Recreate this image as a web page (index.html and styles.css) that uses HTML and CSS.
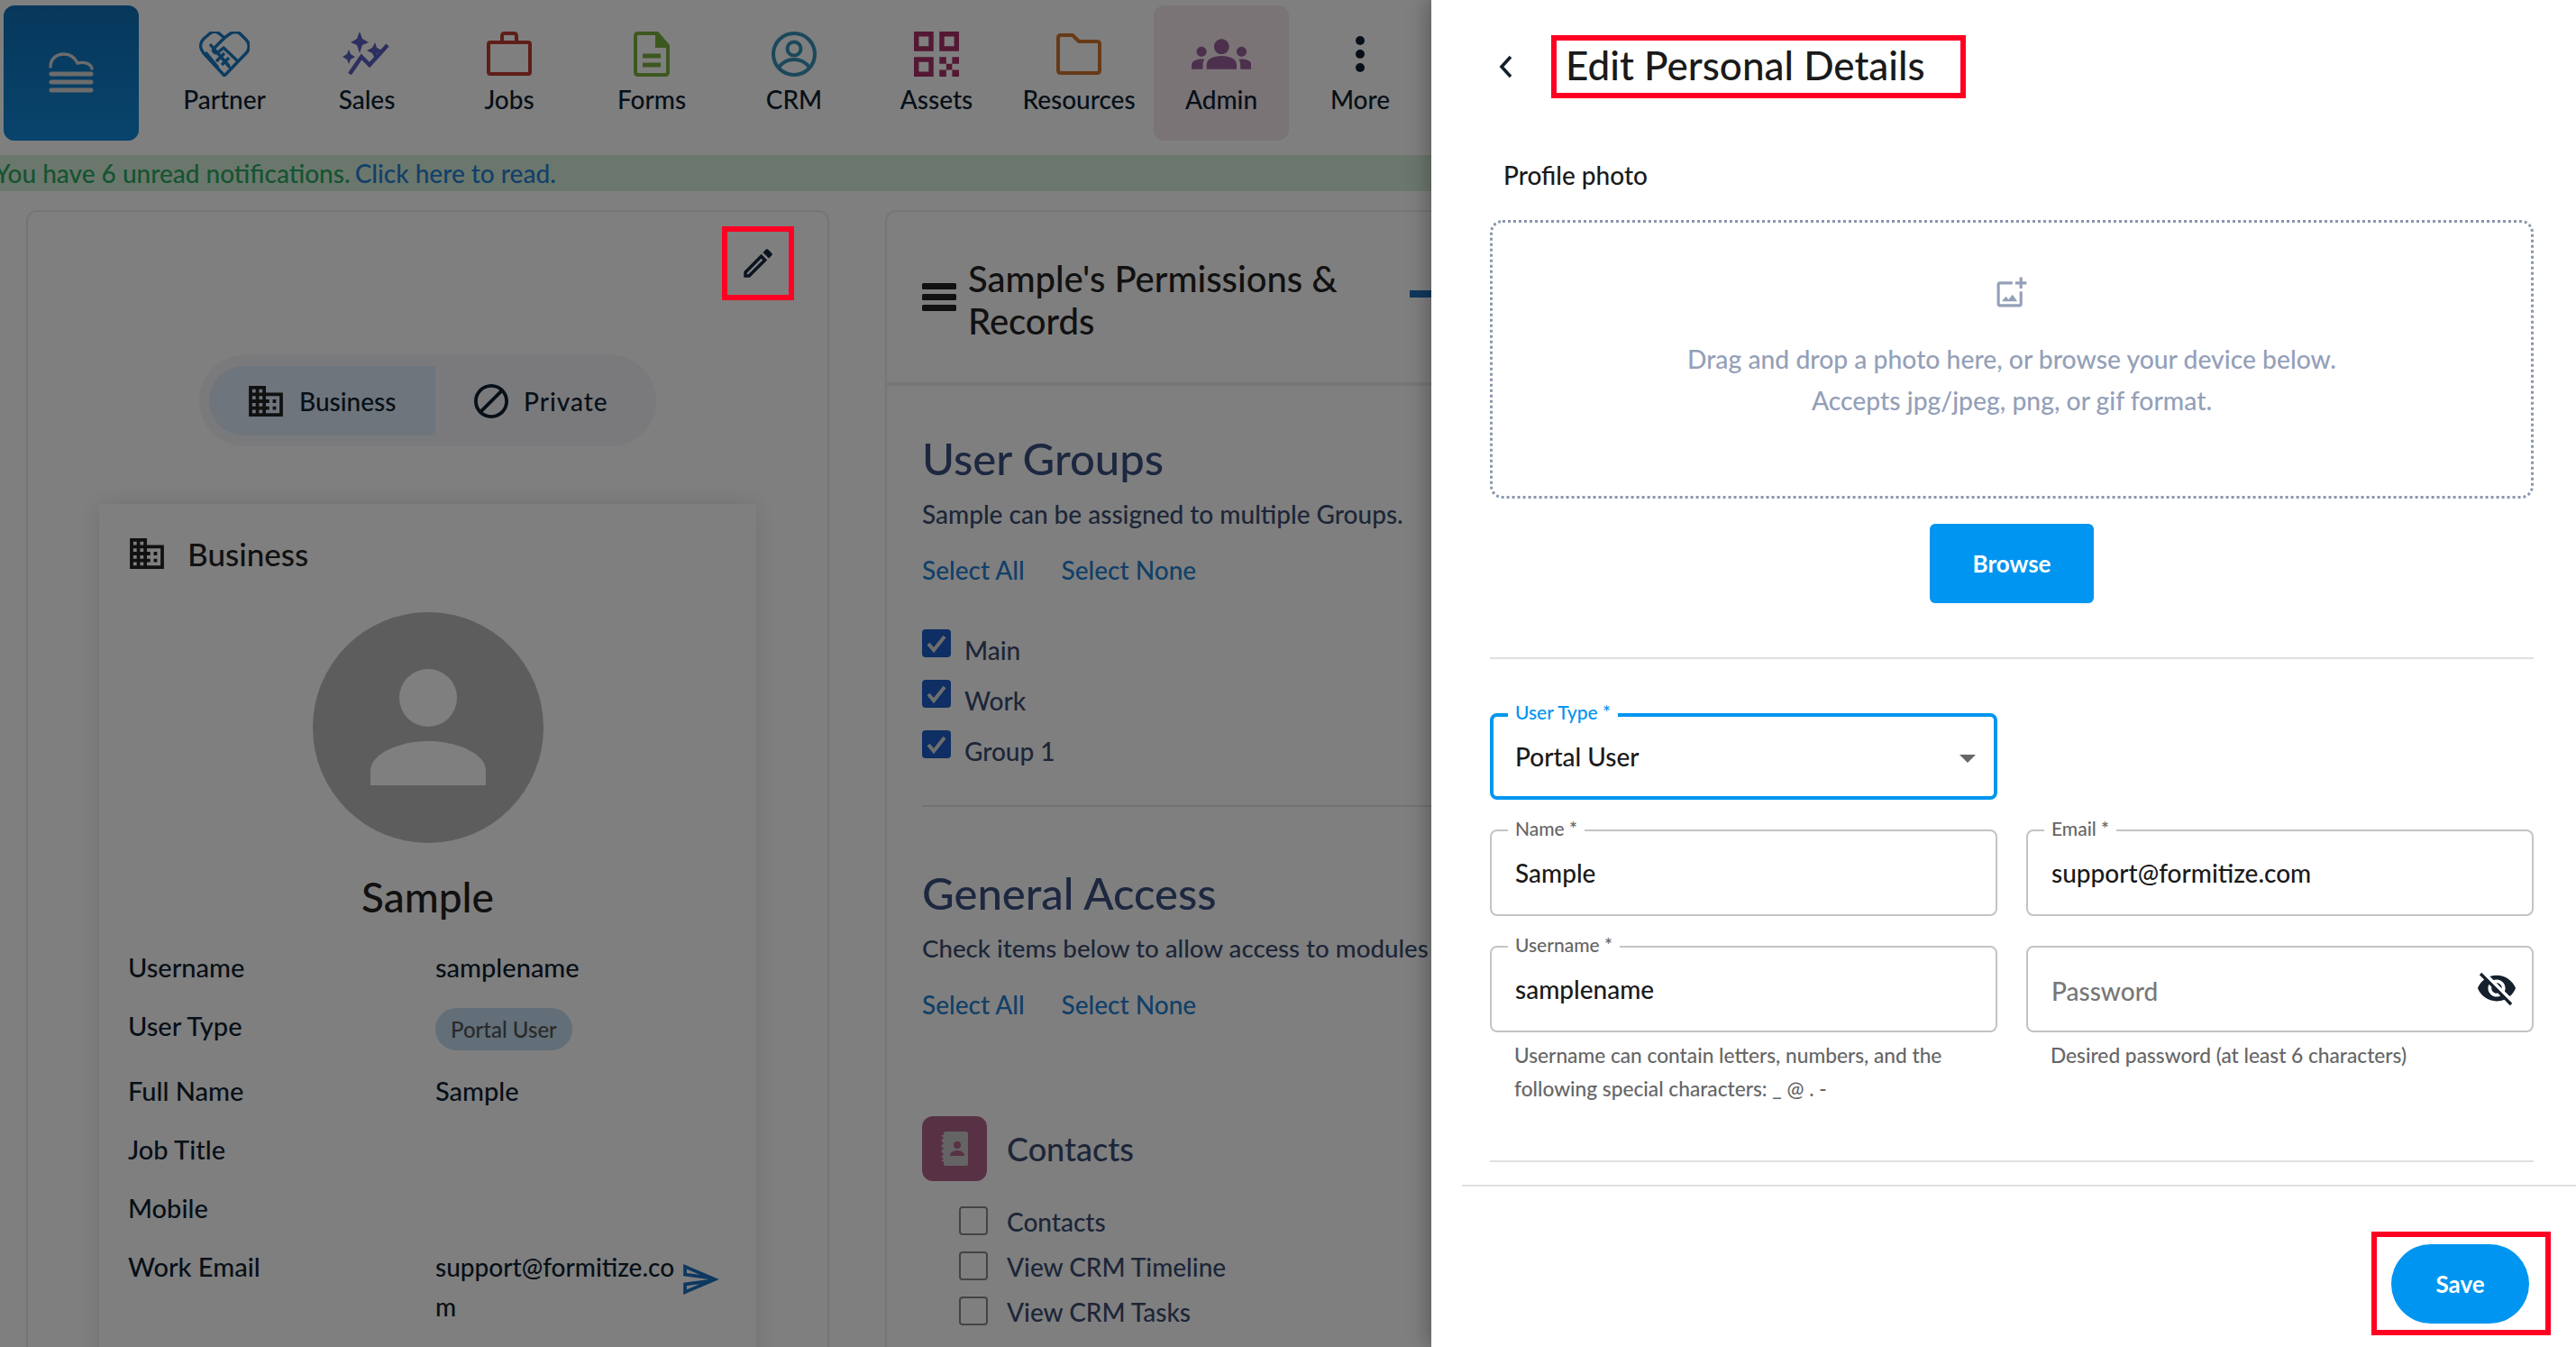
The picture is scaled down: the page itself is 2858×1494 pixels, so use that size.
FILE: index.html
```html
<!DOCTYPE html>
<html lang="en">
<head>
    <meta charset="UTF-8">
    <meta name="viewport" content="width=device-width, initial-scale=1.0">
    <title>Edit Personal Details</title>
    <link rel="stylesheet" href="styles.css">
</head>
<body>
    <div class="page">
        <nav class="topnav">
            <a class="logo-tile">
                <svg viewBox="0 0 50 46" width="50" height="46" fill="none" stroke="#d8d8d8" stroke-linecap="round">
                    <path d="M2 16C2 7 9 2 17 2c7 0 12 4 15 10 8-2 15 1 16 6" stroke-width="3.4"/>
                    <path d="M3 24h44M3 33h44M3 42h44" stroke-width="5"/>
                </svg>
            </a>
            <a class="nav-item">
                <svg class="nav-icon" viewBox="0 0 56 50" fill="none" stroke="#1878c0" stroke-width="3.4" stroke-linejoin="round">
                    <path d="M28 49 5 24C0 18 1 12 5 8l7-6c3-2 7-2 10 0l6 5 7-5c4-2 8-2 11 1l6 6c4 4 4 10 1 14z"/>
                    <path d="m28 7-12 12c-2 3 2 6 5 4l6-5 17 16M12 14l22 26M7 23l14 17M17 20l16 18M28 24l-9 9M33 29l-8 8"/>
                </svg>
                <span>Partner</span>
            </a>
            <a class="nav-item">
                <svg class="nav-icon" viewBox="0 0 55 50" fill="#5a5ec0">
                    <path d="M19 0l3 8 7 4-7 3-3 9-3-9-7-3 7-4zM36 12l2 6 6 3-6 3-2 6-3-6-6-3 6-3zM7 20l2 5 5 3-5 3-2 5-2-5-5-3 5-3z"/>
                    <path d="M8 47 21 28l9 9 20-22" fill="none" stroke="#5a5ec0" stroke-width="4.5"/>
                </svg>
                <span>Sales</span>
            </a>
            <a class="nav-item">
                <svg class="nav-icon" viewBox="0 0 50 50" fill="none" stroke="#c03c32" stroke-width="4">
                    <rect x="2" y="12" width="46" height="35" rx="2"/>
                    <path d="M17 12V5c0-2 1-3 3-3h10c2 0 3 1 3 3v7"/>
                </svg>
                <span>Jobs</span>
            </a>
            <a class="nav-item">
                <svg class="nav-icon" viewBox="0 0 40 50" fill="none" stroke="#7ab03e" stroke-width="4">
                    <path d="M2 5c0-2 1-3 3-3h21l12 14v29c0 2-1 3-3 3H5c-2 0-3-1-3-3z"/>
                    <path d="M26 2l12 14H26z" fill="#7ab03e"/>
                    <path d="M10 27h20M10 37h20" stroke-width="5"/>
                </svg>
                <span>Forms</span>
            </a>
            <a class="nav-item">
                <svg class="nav-icon" viewBox="0 0 50 50" fill="none" stroke="#3690b8" stroke-width="4">
                    <circle cx="25" cy="25" r="23"/>
                    <circle cx="25" cy="19" r="7.5"/>
                    <path d="M8 40c4-6 10-9 17-9s13 3 17 9"/>
                </svg>
                <span>CRM</span>
            </a>
            <a class="nav-item">
                <svg class="nav-icon" viewBox="0 0 46 46" fill="#a83068">
                    <path d="M0 0h20v20H0zm5 5v10h10V5zM26 0h20v20H26zm5 5v10h10V5zM0 26h20v20H0zm5 5v10h10V31zM26 26h7v7h-7zM39 26h7v7h-7zM33 33h6v6h-6zM26 39h7v7h-7zM39 39h7v7h-7z" fill-rule="evenodd"/>
                </svg>
                <span>Assets</span>
            </a>
            <a class="nav-item">
                <svg class="nav-icon" viewBox="0 0 50 50" fill="none" stroke="#d07430" stroke-width="4" stroke-linejoin="round">
                    <path d="M2 7c0-2 1-3 3-3h13l7 7h20c2 0 3 1 3 3v29c0 2-1 3-3 3H5c-2 0-3-1-3-3z"/>
                </svg>
                <span>Resources</span>
            </a>
            <a class="nav-item is-active">
                <svg class="nav-icon" viewBox="0 3 24 18" fill="#98609a">
                    <path d="M12 12.75c1.63 0 3.07.39 4.24.9 1.08.48 1.76 1.56 1.76 2.73V18H6v-1.61c0-1.18.68-2.26 1.76-2.73 1.17-.52 2.61-.91 4.24-.91zM4 13c1.1 0 2-.9 2-2s-.9-2-2-2-2 .9-2 2 .9 2 2 2zm1.13 1.1c-.37-.06-.74-.1-1.13-.1-.99 0-1.93.21-2.78.58C.48 14.9 0 15.62 0 16.43V18h4.5v-1.61c0-.83.23-1.61.63-2.29zM20 13c1.1 0 2-.9 2-2s-.9-2-2-2-2 .9-2 2 .9 2 2 2zm4 3.43c0-.81-.48-1.53-1.22-1.85-.85-.37-1.79-.58-2.78-.58-.39 0-.76.04-1.13.1.4.68.63 1.46.63 2.29V18H24v-1.57zM12 6c1.66 0 3 1.34 3 3s-1.34 3-3 3-3-1.34-3-3 1.34-3 3-3z"/>
                </svg>
                <span>Admin</span>
            </a>
            <a class="nav-item nav-more">
                <svg class="nav-icon" viewBox="0 0 12 50" fill="#0e1e30">
                    <circle cx="6" cy="10" r="5"/><circle cx="6" cy="25" r="5"/><circle cx="6" cy="40" r="5"/>
                </svg>
                <span>More</span>
            </a>
        </nav>

        <div class="notice">You have 6 unread notifications. <a>Click here to read.</a></div>

        <div class="content">
            <section class="card user-card">
                <button class="edit-btn">
                    <svg viewBox="0 0 24 24" width="42" height="42" fill="#0a1420"><path d="M3 17.25V21h3.75L17.81 9.94l-3.75-3.75L3 17.25zM5.92 19H5v-.92l9.06-9.06.92.92L5.92 19zM20.71 5.63l-2.34-2.34c-.2-.2-.45-.29-.71-.29s-.51.1-.7.29l-1.83 1.83 3.75 3.75 1.83-1.83c.39-.39.39-1.02 0-1.41z"/></svg>
                </button>

                <div class="toggle">
                    <div class="toggle-opt is-on">
                        <svg viewBox="2 3 20 18" width="38" height="34" fill="#222"><path d="M12 7V3H2v18h20V7H12zM6 19H4v-2h2v2zm0-4H4v-2h2v2zm0-4H4V9h2v2zm0-4H4V5h2v2zm4 12H8v-2h2v2zm0-4H8v-2h2v2zm0-4H8V9h2v2zm0-4H8V5h2v2zm10 12h-8v-2h2v-2h-2v-2h2v-2h-2V9h8v10zm-2-8h-2v2h2v-2zm0 4h-2v2h2v-2z"/></svg>
                        <span>Business</span>
                    </div>
                    <div class="toggle-opt">
                        <svg viewBox="2 2 20 20" width="38" height="38" fill="#0e1e30"><path d="M12 2C6.48 2 2 6.48 2 12s4.48 10 10 10 10-4.48 10-10S17.52 2 12 2zM4 12c0-4.42 3.58-8 8-8 1.85 0 3.55.63 4.9 1.69L5.69 16.9C4.63 15.55 4 13.85 4 12zm8 8c-1.85 0-3.55-.63-4.9-1.69L18.31 7.1C19.37 8.45 20 10.15 20 12c0 4.42-3.58 8-8 8z"/></svg>
                        <span class="private-text">Private</span>
                    </div>
                </div>

                <div class="profile">
                    <h3 class="profile-head">
                        <svg viewBox="2 3 20 18" width="38" height="34" fill="#222"><path d="M12 7V3H2v18h20V7H12zM6 19H4v-2h2v2zm0-4H4v-2h2v2zm0-4H4V9h2v2zm0-4H4V5h2v2zm4 12H8v-2h2v2zm0-4H8v-2h2v2zm0-4H8V9h2v2zm0-4H8V5h2v2zm10 12h-8v-2h2v-2h-2v-2h2v-2h-2V9h8v10zm-2-8h-2v2h2v-2zm0 4h-2v2h2v-2z"/></svg>
                        Business
                    </h3>
                    <svg class="avatar" viewBox="0 0 256 256">
                        <circle cx="128" cy="128" r="128" fill="#bbb"/>
                        <circle cx="128" cy="95" r="32" fill="#fff"/>
                        <path d="M64 192v-16c0-20 34-33 64-33s64 13 64 33v16z" fill="#fff"/>
                    </svg>
                    <h2 class="profile-name">Sample</h2>
                    <div class="rows">
                        <div class="row"><span class="row-label">Username</span><span class="row-value">samplename</span></div>
                        <div class="row row-chip"><span class="row-label">User Type</span><span class="chip">Portal User</span></div>
                        <div class="row"><span class="row-label">Full Name</span><span class="row-value">Sample</span></div>
                        <div class="row"><span class="row-label">Job Title</span></div>
                        <div class="row"><span class="row-label">Mobile</span></div>
                        <div class="row">
                            <span class="row-label">Work Email</span>
                            <span class="row-value row-email">support@formitize.com</span>
                            <svg class="send-icon" viewBox="2 3 21 18" width="40" height="34" fill="#1a70c0"><path d="M4.01 6.03l7.51 3.22-7.52-1 .01-2.22m7.5 8.72L4 17.97v-2.22l7.51-1M2.01 3L2 10l15 2-15 2 .01 7L23 12 2.01 3z"/></svg>
                        </div>
                    </div>
                </div>
            </section>

            <section class="card perms-card">
                <header class="perms-head">
                    <svg viewBox="0 0 38 31" width="38" height="31" fill="#222"><rect width="38" height="7" rx="1.5"/><rect y="12" width="38" height="7" rx="1.5"/><rect y="24" width="38" height="7" rx="1.5"/></svg>
                    <h2>Sample's Permissions &amp; Records</h2>
                    <i class="dash"></i>
                </header>
                <div class="perms-body">
                    <h3 class="section-title">User Groups</h3>
                    <p class="section-text">Sample can be assigned to multiple Groups.</p>
                    <div class="links"><a>Select All</a><a>Select None</a></div>
                    <ul class="checks">
                        <li><span class="box is-checked"><svg viewBox="0 0 32 31" width="32" height="31"><path d="M7 16l6 7 12-15" fill="none" stroke="#ddd" stroke-width="4"/></svg></span><span class="check-text">Main</span></li>
                        <li><span class="box is-checked"><svg viewBox="0 0 32 31" width="32" height="31"><path d="M7 16l6 7 12-15" fill="none" stroke="#ddd" stroke-width="4"/></svg></span><span class="check-text">Work</span></li>
                        <li><span class="box is-checked"><svg viewBox="0 0 32 31" width="32" height="31"><path d="M7 16l6 7 12-15" fill="none" stroke="#ddd" stroke-width="4"/></svg></span><span class="check-text">Group 1</span></li>
                    </ul>
                    <hr class="section-rule">
                    <h3 class="section-title access-title">General Access</h3>
                    <p class="section-text access-text">Check items below to allow access to modules</p>
                    <div class="links"><a>Select All</a><a>Select None</a></div>
                    <div class="module">
                        <span class="module-icon">
                            <svg viewBox="0 0 30 38" width="30" height="38" fill="#c8c8c8"><path d="M3 2c0-1 1-2 2-2h23c1 0 2 1 2 2v34c0 1-1 2-2 2H5c-1 0-2-1-2-2v-3H0l3-3-3-2 3-3-3-3 3-3-3-3 3-3-3-3 3-3-3-3h3z"/><circle cx="18" cy="15" r="4" fill="#b06488"/><path d="M10 27c0-4 4-6 8-6s8 2 8 6z" fill="#b06488"/></svg>
                        </span>
                        <span class="module-name">Contacts</span>
                    </div>
                    <ul class="checks sub-checks">
                        <li><span class="box"></span><span>Contacts</span></li>
                        <li><span class="box"></span><span>View CRM Timeline</span></li>
                        <li><span class="box"></span><span>View CRM Tasks</span></li>
                    </ul>
                </div>
            </section>
        </div>
    </div>

    <div class="scrim"></div>

    <aside class="drawer">
        <header class="drawer-head">
            <svg class="back" viewBox="0 0 15 26" width="15" height="26" fill="none" stroke="#14202c" stroke-width="3.6"><path d="M13 2 3 13l10 11"/></svg>
            <h1 class="drawer-title">Edit Personal Details</h1>
        </header>

        <div class="photo-label">Profile photo</div>
        <div class="dropzone">
            <svg viewBox="1 0 23 23" width="36" height="36" fill="#94a0b8"><path d="M18 20H4V6h9V4H4c-1.1 0-2 .9-2 2v14c0 1.1.9 2 2 2h14c1.1 0 2-.9 2-2v-9h-2v9zm-7.79-3.17l-1.96-2.36L5.5 18h11l-3.54-4.71zM20 4V1h-2v3h-3c.01.01 0 2 0 2h3v2.99c.01.01 2 0 2 0V6h3V4h-3z"/></svg>
            <p>Drag and drop a photo here, or browse your device below.</p>
            <p>Accepts jpg/jpeg, png, or gif format.</p>
        </div>
        <button class="browse">Browse</button>
        <hr class="rule rule-form">

        <div class="fields">
            <div class="field is-focus">
                <label>User Type *</label>
                <span>Portal User</span>
                <i class="caret"></i>
            </div>
            <div class="field-gap"></div>
            <div class="field"><label>Name *</label><span>Sample</span></div>
            <div class="field"><label>Email *</label><span>support@formitize.com</span></div>
            <div class="field-wrap">
                <div class="field"><label>Username *</label><span>samplename</span></div>
                <p class="helper">Username can contain letters, numbers, and the following special characters: _ @ . -</p>
            </div>
            <div class="field-wrap">
                <div class="field">
                    <span class="placeholder">Password</span>
                    <svg class="eye" viewBox="0 0 24 24" width="46" height="46" fill="#14202c"><path d="M12 7c2.76 0 5 2.24 5 5 0 .65-.13 1.26-.36 1.83l2.92 2.92c1.51-1.26 2.7-2.89 3.43-4.75-1.73-4.39-6-7.5-11-7.5-1.4 0-2.74.25-3.98.7l2.16 2.16C10.74 7.13 11.35 7 12 7zM2 4.27l2.28 2.28.46.46C3.08 8.3 1.78 10.02 1 12c1.73 4.39 6 7.5 11 7.5 1.55 0 3.03-.3 4.38-.84l.42.42L19.73 22 21 20.73 3.27 3 2 4.27zM7.53 9.8l1.55 1.55c-.05.21-.08.43-.08.65 0 1.66 1.34 3 3 3 .22 0 .44-.03.65-.08l1.55 1.55c-.67.33-1.41.53-2.2.53-2.76 0-5-2.24-5-5 0-.79.2-1.53.53-2.2zm4.31-.78l3.15 3.15.02-.16c0-1.66-1.34-3-3-3l-.17.01z"/></svg>
                </div>
                <p class="helper">Desired password (at least 6 characters)</p>
            </div>
        </div>
        <hr class="rule rule-end">

        <footer class="drawer-foot">
            <div class="save-mark"><button class="save">Save</button></div>
        </footer>
    </aside>
</body>
</html>
```

FILE: styles.css
```css
* {
    box-sizing: border-box;
}

html, body {
    margin: 0;
    height: 1494px;
    overflow: hidden;
}

body {
    position: relative;
    font-family: "Lato", "Open Sans", sans-serif;
    font-size: 28px;
    font-weight: 500;
    color: #0e1e30;
    background-color: #fff;
}

/* page behind the drawer */
.page {
    width: 1600px;
    height: 1494px;
    overflow: hidden;
}

.topnav {
    display: flex;
    gap: 8px;
    height: 172px;
    padding: 6px 0 0 4px;
}

.logo-tile {
    display: flex;
    align-items: center;
    justify-content: center;
    width: 150px;
    height: 150px;
    margin-right: 12px;
    border-radius: 12px;
    background: linear-gradient(#0f70b8, #1088d8);
}

.nav-item {
    display: flex;
    flex-direction: column;
    align-items: center;
    width: 150px;
    height: 150px;
    padding-top: 29px;
    border-radius: 12px;
    line-height: 34px;
}

.nav-item span {
    margin-top: 8px;
}

.nav-icon {
    height: 50px;
}

.nav-more {
    width: 142px;
}

.is-active {
    background-color: #f4e8ee;
}

.notice {
    height: 40px;
    text-indent: -6px;
    line-height: 40px;
    white-space: nowrap;
    color: #2aa860;
    background-color: #d6eeda;
}

.notice a {
    margin-left: -2px;
    color: #2480d0;
}

.content {
    display: flex;
    gap: 62px;
    padding: 21px 0 0 29px;
}

.card {
    flex: none;
    height: 1300px;
    border: 2px solid #eaeaea;
    border-radius: 12px;
    background-color: #fff;
}

.user-card {
    position: relative;
    width: 891px;
    padding-top: 159px;
}

/* the red annotations sit above the scrim */
.edit-btn {
    position: absolute;
    z-index: 2;
    top: 16px;
    right: 37px;
    display: flex;
    align-items: center;
    justify-content: center;
    width: 80px;
    height: 82px;
    border: 6px solid #ff0022;
    background: transparent;
    padding: 0;
}

.toggle {
    display: flex;
    width: 507px;
    height: 101px;
    margin: 0 auto;
    padding: 12px 11px;
    border-radius: 50px;
    background-color: #f4f4f8;
}

.toggle-opt {
    flex: none;
    display: flex;
    align-items: center;
    gap: 18px;
    padding-left: 44px;
    width: 251px;
    border-radius: 40px 0 0 40px;
}

.toggle-opt + .toggle-opt {
    gap: 17px;
    padding-left: 43px;
}

.toggle-opt.is-on {
    background-color: #dceafa;
}

.private-text {
    letter-spacing: 1px;
}

.profile {
    height: 1000px;
    margin: 64px 79px 0;
    padding: 36px 32px 0 34px;
    box-shadow: 0 0 24px rgba(0, 0, 0, 0.12);
    background-color: #fff;
}

.profile-head {
    display: flex;
    align-items: center;
    gap: 26px;
    margin: 0;
    font-size: 35px;
    font-weight: 500;
    line-height: 38px;
    color: #222;
}

.avatar {
    display: block;
    width: 256px;
    height: 256px;
    margin: 46px auto 0;
    transform: translateX(-1px);
}

.profile-name {
    margin: 36px 0 0;
    margin-left: -2px;
    text-align: center;
    font-size: 46px;
    font-weight: 500;
    line-height: 48px;
    color: #222;
}

.rows {
    display: flex;
    flex-direction: column;
    gap: 21px;
    margin-top: 32px;
    margin-left: -2px;
    font-size: 29px;
}

.row {
    display: flex;
    line-height: 44px;
}

.row-chip {
    height: 51px;
}

.row-label {
    flex: none;
    width: 341px;
}

.row-value {
    flex: none;
}

.row-email {
    width: 268px;
    font-size: 28px;
    word-break: break-all;
}

.send-icon {
    margin: 19px 0 0 7px;
}

.chip {
    height: 47px;
    margin-top: 2px;
    padding: 0 17px;
    border-radius: 24px;
    font-size: 24px;
    line-height: 47px;
    color: #555;
    background-color: #c4dcf0;
}

.perms-card {
    width: 900px;
}

.perms-head {
    position: relative;
    display: flex;
    align-items: center;
    gap: 13px;
    height: 193px;
    padding-left: 39px;
    border-bottom: 4px solid #ececf0;
}

.perms-head h2 {
    width: 440px;
    margin: 0;
    padding-top: 7px;
    font-size: 40px;
    font-weight: 500;
    line-height: 47px;
    color: #222;
}

.dash {
    position: absolute;
    top: 87px;
    left: 580px;
    width: 60px;
    height: 8px;
    background-color: #2070b8;
}

.perms-body {
    padding: 52px 0 0 39px;
}

.section-title {
    margin: 0;
    font-size: 49px;
    font-weight: 500;
    line-height: 56px;
    color: #3a5080;
}

.section-text {
    margin: 16px 0 0;
    line-height: 36px;
    white-space: nowrap;
    color: #3a4c70;
}

.links {
    display: flex;
    gap: 41px;
    margin-top: 26px;
    line-height: 36px;
    color: #2280d0;
}

.checks {
    display: flex;
    flex-direction: column;
    gap: 25px;
    margin: 48px 0 0;
    padding: 0;
    list-style: none;
    color: #3a4c70;
}

.checks li {
    display: flex;
    gap: 15px;
    height: 31px;
    line-height: 31px;
}

.check-text {
    padding-top: 8px;
}

.box {
    flex: none;
    width: 32px;
    height: 31px;
    border: 2px solid #888;
    border-radius: 4px;
}

.box.is-checked {
    border: 0;
    background-color: #1c5cc8;
}

.box svg {
    display: block;
}

.section-rule {
    margin: 52px 0 0;
    border: 0;
    border-top: 2px solid #e4e4e4;
}

.access-title {
    margin-top: 67px;
}

.access-text {
    margin-top: 16px;
    font-size: 27.7px;
}

.module {
    display: flex;
    align-items: center;
    gap: 22px;
    margin-top: 106px;
}

.module-icon {
    display: flex;
    align-items: center;
    justify-content: center;
    width: 72px;
    height: 72px;
    border-radius: 12px;
    background-color: #b06488;
}

.module-name {
    font-size: 36px;
    color: #3a4c70;
}

.sub-checks {
    gap: 18px;
    margin: 28px 0 0 41px;
}

.sub-checks li {
    height: 32px;
    gap: 21px;
    line-height: 34px;
}

.sub-checks .box {
    height: 32px;
}

.scrim {
    position: absolute;
    z-index: 1;
    inset: 0;
    background-color: rgba(0, 0, 0, 0.5);
}

/* edit drawer */
.drawer {
    position: absolute;
    z-index: 2;
    top: 0;
    right: 0;
    bottom: 0;
    width: 1270px;
    padding: 39px 47px 0 65px;
    background-color: #fff;
    color: #1a1a1a;
    box-shadow: -6px 0 20px rgba(0, 0, 0, 0.25);
}

.drawer-head {
    display: flex;
    align-items: center;
    gap: 43px;
    padding-left: 10px;
}

.drawer-title {
    width: 460px;
    height: 70px;
    margin: 0;
    padding-left: 10px;
    border: 6px solid #ff0022;
    font-size: 44px;
    font-weight: 500;
    line-height: 55px;
    color: #1a1a1a;
}

.photo-label {
    margin-top: 69px;
    padding-left: 15px;
    line-height: 32px;
}

.dropzone {
    display: flex;
    flex-direction: column;
    align-items: center;
    height: 309px;
    margin-top: 34px;
    padding-top: 59px;
    border: 3px dotted #8a96ac;
    border-radius: 14px;
    font-size: 28.3px;
    color: #94a0b8;
}

.dropzone p {
    margin: 0;
    line-height: 46px;
}

.dropzone svg {
    margin-bottom: 33px;
}

.browse {
    display: block;
    width: 182px;
    height: 88px;
    margin: 28px auto 0;
    border: 0;
    border-radius: 6px;
    font: inherit;
    font-size: 26px;
    font-weight: 700;
    color: #fff;
    background-color: #0095f0;
}

.rule {
    margin: 0;
    border: 0;
    border-top: 2px solid #e0e0e0;
}

.rule-form {
    margin-top: 60px;
}

.fields {
    display: grid;
    grid-template-columns: 563px 563px;
    column-gap: 32px;
    row-gap: 33px;
    margin-top: 60px;
}

.field-gap {
    height: 96px;
}

.field {
    position: relative;
    display: flex;
    align-items: center;
    height: 96px;
    padding-left: 26px;
    border: 2px solid #c4c4c4;
    border-radius: 8px;
}

.field label {
    position: absolute;
    top: -15px;
    left: 18px;
    padding: 0 8px;
    font-size: 21px;
    line-height: 24px;
    color: #666;
    background-color: #fff;
}

.field.is-focus {
    border: 4px solid #0095f0;
    padding-left: 24px;
}

.field.is-focus label {
    top: -17px;
    left: 16px;
    color: #0095f0;
}

.caret {
    position: absolute;
    top: 42px;
    right: 20px;
    border-style: solid;
    border-width: 9px 9px 0;
    border-color: #666 transparent transparent;
}

.placeholder {
    padding-top: 4px;
    color: #777;
}

.eye {
    position: absolute;
    top: 22px;
    right: 16px;
}

.helper {
    margin: 7px 0 0;
    padding: 0 27px;
    font-size: 22.7px;
    line-height: 37px;
    color: #666;
}

.rule-end {
    margin-top: 61px;
}

.drawer-foot {
    display: flex;
    justify-content: flex-end;
    margin: 25px -47px 0 -31px;
    padding: 50px 28px 0 0;
    border-top: 2px solid #e0e0e0;
}

.save-mark {
    width: 199px;
    height: 115px;
    padding: 8px 0 0 16px;
    border: 6px solid #ff0022;
}

.save {
    display: block;
    width: 153px;
    height: 88px;
    border: 0;
    border-radius: 44px;
    font: inherit;
    font-size: 26px;
    font-weight: 700;
    color: #fff;
    background-color: #0095f0;
}
```
